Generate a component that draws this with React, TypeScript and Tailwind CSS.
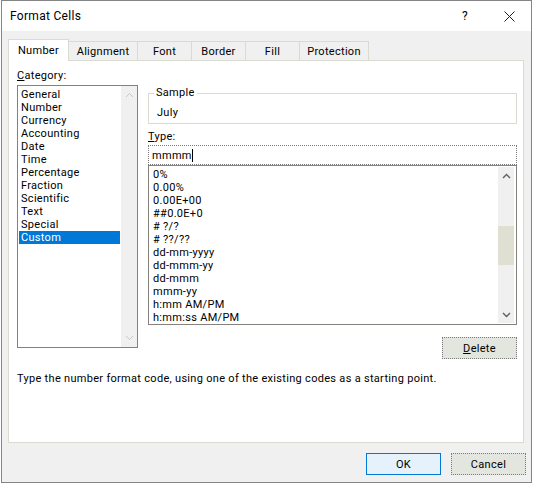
import React from "react";

const categories = [
  "General",
  "Number",
  "Currency",
  "Accounting",
  "Date",
  "Time",
  "Percentage",
  "Fraction",
  "Scientific",
  "Text",
  "Special",
  "Custom",
];

const formats = [
  "0%",
  "0.00%",
  "0.00E+00",
  "##0.0E+0",
  "# ?/?",
  "# ??/??",
  "dd-mm-yyyy",
  "dd-mmm-yy",
  "dd-mmm",
  "mmm-yy",
  "h:mm AM/PM",
  "h:mm:ss AM/PM",
];

const tabs = [
  { label: "Number", w: "w-[61px]" },
  { label: "Alignment", w: "w-[70px]" },
  { label: "Font", w: "w-[55px]" },
  { label: "Border", w: "w-[55px]" },
  { label: "Fill", w: "w-[55px]" },
  { label: "Protection", w: "w-[70px]" },
];

function Chevron({ up, faint }: { up?: boolean; faint?: boolean }) {
  return (
    <svg width="9" height="6" viewBox="0 0 9 6" className={faint ? "text-[#c8c8c0]" : "text-[#606060]"}>
      <path
        d={up ? "M1 5 L4.5 1.5 L8 5" : "M1 1 L4.5 4.5 L8 1"}
        fill="none"
        stroke="currentColor"
        strokeWidth={faint ? 1 : 1.4}
      />
    </svg>
  );
}

export default function App() {
  return (
    <div className="w-[533px] h-[484px] bg-white font-['Roboto',sans-serif] text-[11px] leading-[13px] tracking-[0.3px] text-[#000]">
      <div className="ml-px w-[531px] h-[483px] border border-[#858585] bg-[#f0f0f0] flex flex-col">
        {/* title bar */}
        <div className="h-[30px] bg-white flex items-center pl-[8px] pr-[16px] pt-px text-[12px] shrink-0">
          <span>Format Cells</span>
          <span className="ml-auto mr-[36px]">?</span>
          <svg width="11" height="11" viewBox="0 0 11 11">
            <path d="M0.5 0.5 L10.5 10.5 M10.5 0.5 L0.5 10.5" stroke="#222" strokeWidth="1" />
          </svg>
        </div>

        <div className="pl-[6px] pt-[8px]">
          {/* tabs */}
          <div className="flex items-end">
            {tabs.map((t, i) => (
              <div
                key={t.label}
                className={
                  i === 0
                    ? `${t.w} h-[22px] -mb-px relative z-10 bg-white border border-b-0 border-[#dadbd0] flex items-center justify-center`
                    : `${t.w} h-[19px] -ml-px bg-[#f0f0f0] border border-b-0 border-[#dadbd0] flex items-center justify-center`
                }
              >
                {t.label}
              </div>
            ))}
          </div>

          {/* panel */}
          <div className="w-[516px] h-[383px] bg-white border border-[#dadbd0] pl-[8px] pr-[6px] pt-[8px]">
            <div className="flex gap-[10px]">
              {/* category */}
              <div className="w-[121px]">
                <div className="h-[14px] leading-[14px]">
                  <span className="underline">C</span>ategory:
                </div>
                <div className="mt-[2px] h-[263px] border border-[#85817c] flex">
                  <div className="flex-1 px-px pt-[2px]">
                    {categories.map((c) => (
                      <div
                        key={c}
                        className={
                          c === "Custom"
                            ? "h-[13px] px-[2px] bg-[#0078d7] text-white"
                            : "h-[13px] px-[2px]"
                        }
                      >
                        {c}
                      </div>
                    ))}
                  </div>
                  <div className="w-[16px] bg-[#f0f0f0] flex flex-col items-center justify-between py-[6px]">
                    <Chevron up faint />
                    <Chevron faint />
                  </div>
                </div>
              </div>

              {/* right column */}
              <div className="w-[369px] pt-[17px] flex flex-col">
                <fieldset className="h-[38px] border border-[#dadbd0]">
                  <legend className="ml-[5px] px-[2px] leading-[14px]">Sample</legend>
                  <div className="pl-[8px] pt-[6px] leading-[14px]">July</div>
                </fieldset>

                <div className="mt-[6px] h-[14px] leading-[14px]">
                  <span className="underline">T</span>ype:
                </div>
                <div className="mt-px h-[20px] border border-dotted border-[#7a7a7a] flex items-center pl-[3px]">
                  <span>mmmm</span>
                  <span className="w-px h-[13px] bg-black" />
                </div>
                <div className="h-[160px] border border-[#85817c] flex p-px">
                  <div className="flex-1 pl-[3px] pt-px">
                    {formats.map((f) => (
                      <div key={f} className="h-[13px]">
                        {f}
                      </div>
                    ))}
                  </div>
                  <div className="w-[16px] mr-px bg-[#f0f0f0] flex flex-col">
                    <div className="h-[17px] flex items-center justify-center">
                      <Chevron up />
                    </div>
                    <div className="h-[42px]" />
                    <div className="h-[39px] bg-[#dfe0d2]" />
                    <div className="flex-1" />
                    <div className="h-[17px] flex items-center justify-center">
                      <Chevron />
                    </div>
                  </div>
                </div>

                <div className="mt-[12px] flex justify-end">
                  <button className="w-[75px] h-[22px] bg-[#e3e6df] border border-dotted border-[#7a7a7a] flex items-center justify-center">
                    <span>
                      <span className="underline">D</span>elete
                    </span>
                  </button>
                </div>
              </div>
            </div>

            <div className="mt-[13px] leading-[14px]">
              Type the number format code, using one of the existing codes as a starting point.
            </div>
          </div>
        </div>

        {/* footer */}
        <div className="mt-[10px] flex justify-end gap-[10px] pr-[5px]">
          <button className="w-[75px] h-[22px] bg-[#e5f1fb] border border-[#0078d7] flex items-center justify-center">
            OK
          </button>
          <button className="w-[75px] h-[22px] bg-[#e3e6df] border border-dotted border-[#7a7a7a] flex items-center justify-center">
            Cancel
          </button>
        </div>
      </div>
    </div>
  );
}
